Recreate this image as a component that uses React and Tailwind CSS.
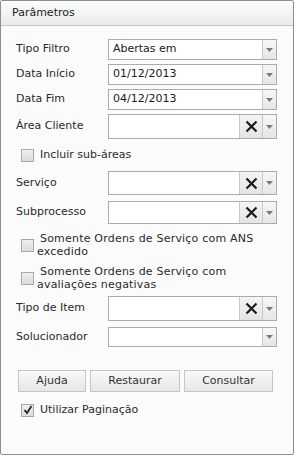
import React from 'react';

const font = { fontFamily: '"DejaVu Sans", Verdana, sans-serif' };

function Arrow() {
  return (
    <div className="flex h-full w-[14px] items-center justify-center border-l border-[#c9c9c9] bg-gradient-to-b from-[#f7f7f7] to-[#e6e6e6]">
      <svg width="7" height="4" viewBox="0 0 7 4">
        <path d="M0 0h7L3.5 4z" fill="#7a7a7a" />
      </svg>
    </div>
  );
}

function Clear() {
  return (
    <div className="flex h-full w-[23px] items-center justify-center border-l border-[#c9c9c9] bg-gradient-to-b from-[#f4f4f4] to-[#e4e4e4]">
      <svg width="13" height="13" viewBox="0 0 13 13">
        <path d="M1.5 1.5l10 10M11.5 1.5l-10 10" stroke="#1a1a1a" strokeWidth="2.2" />
      </svg>
    </div>
  );
}

function Field({ label, value, clear, h, mt }) {
  return (
    <div className={`flex items-center ${mt}`}>
      <span className="w-[107px] pl-[15px] text-[11px] text-[#2a2a2a]">{label}</span>
      <div className={`flex w-[169px] ${h} items-stretch border border-[#ababab] bg-white`}>
        <div className="flex flex-1 items-center pl-[4px] text-[11px] text-[#1a1a1a]">{value}</div>
        {clear && <Clear />}
        <Arrow />
      </div>
    </div>
  );
}

function Box({ checked }) {
  return (
    <div className="flex h-[13px] w-[13px] shrink-0 items-center justify-center border border-[#a9a9a9] bg-gradient-to-b from-[#eeeeee] to-[#dcdcdc]">
      {checked && (
        <svg width="10" height="10" viewBox="0 0 10 10">
          <path d="M1.5 5l2.5 3 4.5-7" stroke="#222" strokeWidth="1.8" fill="none" />
        </svg>
      )}
    </div>
  );
}

function Check({ children, mt, checked }) {
  return (
    <div className={`flex items-center gap-[6px] pl-[20px] ${mt}`}>
      <Box checked={checked} />
      <span className="text-[11px] leading-[16px] text-[#2a2a2a]">{children}</span>
    </div>
  );
}

function Check2({ children, mt }) {
  return (
    <div className={`flex items-center gap-[3px] pl-[20px] pr-[28px] ${mt}`}>
      <Box />
      <span className="indent-[3px] text-[11px] leading-[13px] tracking-[0.2px] text-[#2a2a2a]">{children}</span>
    </div>
  );
}

function Btn({ children, w }) {
  return (
    <div className={`flex h-[22px] ${w} items-center justify-center border border-[#c6c6c6] bg-gradient-to-b from-[#f8f8f8] to-[#e7e7e7] text-[11px] text-[#333]`}>
      {children}
    </div>
  );
}

export default function App() {
  return (
    <div className="h-[457px] w-[295px] bg-white" style={font}>
      <div className="flex h-[455px] w-[294px] flex-col overflow-hidden rounded-[2px] border border-[#8e8e8e] bg-[#fbfbfb]">
        <div className="flex h-[25px] shrink-0 items-center border-b border-[#c4c7ca] bg-gradient-to-b from-[#fdfdfd] to-[#e8ebee] pl-[11px] text-[11px] text-[#222]">
          Parâmetros
        </div>
        <Field label="Tipo Filtro" value="Abertas em" h="h-[21px]" mt="mt-[13px]" />
        <Field label="Data Início" value="01/12/2013" h="h-[21px]" mt="mt-[4px]" />
        <Field label="Data Fim" value="04/12/2013" h="h-[21px]" mt="mt-[4px]" />
        <Field label="Área Cliente" clear h="h-[25px]" mt="mt-[4px]" />
        <Check mt="mt-[8px]">Incluir sub-áreas</Check>
        <Field label="Serviço" clear h="h-[24px]" mt="mt-[8px]" />
        <Field label="Subprocesso" clear h="h-[23px]" mt="mt-[6px]" />
        <Check2 mt="mt-[8px]">Somente Ordens de Serviço com ANS excedido</Check2>
        <Check2 mt="mt-[7px]">Somente Ordens de Serviço com avaliações negativas</Check2>
        <Field label="Tipo de Item" clear h="h-[25px]" mt="mt-[5px]" />
        <Field label="Solucionador" h="h-[20px]" mt="mt-[6px]" />
        <div className="mt-[23px] flex gap-[4px] pl-[17px]">
          <Btn w="w-[68px]">Ajuda</Btn>
          <Btn w="w-[90px]">Restaurar</Btn>
          <Btn w="w-[89px]">Consultar</Btn>
        </div>
        <Check mt="mt-[10px]" checked>Utilizar Paginação</Check>
      </div>
    </div>
  );
}
